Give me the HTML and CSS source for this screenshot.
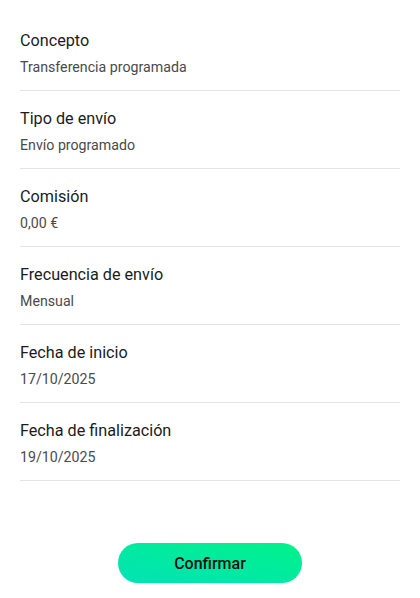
FILE: index.html
```
<!DOCTYPE html>
<html lang="es">
<head>
    <meta charset="UTF-8">
    <meta name="viewport" content="width=device-width, initial-scale=1.0">
    <title>Resumen de transferencia</title>
    <link rel="stylesheet" href="styles.css">
</head>
<body>
    <ul class="details">
        <li class="row">
            <div class="label">Concepto</div>
            <div class="value">Transferencia programada</div>
        </li>
        <li class="row">
            <div class="label">Tipo de envío</div>
            <div class="value">Envío programado</div>
        </li>
        <li class="row">
            <div class="label">Comisión</div>
            <div class="value">0,00 €</div>
        </li>
        <li class="row">
            <div class="label">Frecuencia de envío</div>
            <div class="value">Mensual</div>
        </li>
        <li class="row">
            <div class="label">Fecha de inicio</div>
            <div class="value">17/10/2025</div>
        </li>
        <li class="row">
            <div class="label">Fecha de finalización</div>
            <div class="value">19/10/2025</div>
        </li>
    </ul>

    <div class="actions">
        <button type="button" class="confirm">Confirmar</button>
    </div>
</body>
</html>
```

FILE: styles.css
```
body {
    background-color: #fff;
    color: #1b1b1b;
    font-family: Roboto, "Noto Sans", Arial, sans-serif;
    margin: 0;
    padding: 13px 20px 0;
}

.details {
    list-style: none;
    margin: 0;
    padding: 0;
}

.row {
    padding: 16px 0 13px;
    border-bottom: 1px solid #e4e4e4;
}

.label {
    font-size: 16.2px;
    line-height: 24px;
    color: #1b1b1b;
}

.value {
    font-size: 14.2px;
    line-height: 20px;
    margin-top: 4px;
    color: #4a4a4a;
}

.actions {
    display: flex;
    justify-content: center;
    margin-top: 62px;
}

.confirm {
    width: 184px;
    height: 40px;
    border: none;
    border-radius: 20px;
    background: linear-gradient(to top right, #02e2b6, #00f28a);
    color: #111;
    font-family: Roboto, Arial, sans-serif;
    font-size: 16px;
    font-weight: 500;
    cursor: pointer;
}
```
